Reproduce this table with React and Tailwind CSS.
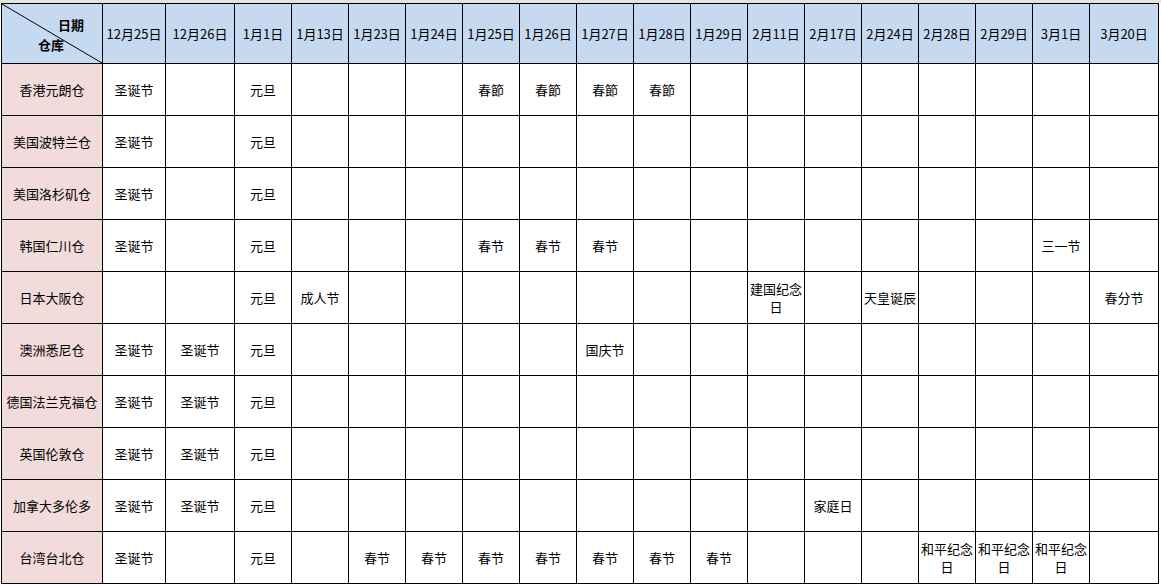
const DATES = [
  "12月25日", "12月26日", "1月1日", "1月13日", "1月23日", "1月24日",
  "1月25日", "1月26日", "1月27日", "1月28日", "1月29日", "2月11日",
  "2月17日", "2月24日", "2月28日", "2月29日", "3月1日", "3月20日",
];

// each row: warehouse name + { columnIndex: holiday }
const ROWS = [
  ["香港元朗仓", { 0: "圣诞节", 2: "元旦", 6: "春節", 7: "春節", 8: "春節", 9: "春節" }],
  ["美国波特兰仓", { 0: "圣诞节", 2: "元旦" }],
  ["美国洛杉矶仓", { 0: "圣诞节", 2: "元旦" }],
  ["韩国仁川仓", { 0: "圣诞节", 2: "元旦", 6: "春节", 7: "春节", 8: "春节", 16: "三一节" }],
  ["日本大阪仓", { 2: "元旦", 3: "成人节", 11: "建国纪念日", 13: "天皇诞辰", 17: "春分节" }],
  ["澳洲悉尼仓", { 0: "圣诞节", 1: "圣诞节", 2: "元旦", 8: "国庆节" }],
  ["德国法兰克福仓", { 0: "圣诞节", 1: "圣诞节", 2: "元旦" }],
  ["英国伦敦仓", { 0: "圣诞节", 1: "圣诞节", 2: "元旦" }],
  ["加拿大多伦多", { 0: "圣诞节", 1: "圣诞节", 2: "元旦", 12: "家庭日" }],
  [
    "台湾台北仓",
    {
      0: "圣诞节", 2: "元旦", 4: "春节", 5: "春节", 6: "春节", 7: "春节",
      8: "春节", 9: "春节", 10: "春节", 14: "和平纪念日", 15: "和平纪念日", 16: "和平纪念日",
    },
  ],
];

const cell = "flex items-center justify-center text-center px-[2px] leading-[18px]";

export default function App() {
  return (
    <div
      className="w-[1161px] h-[585px] bg-white text-[13px] text-black overflow-hidden"
      style={{ fontFamily: '"Noto Sans CJK SC", "Noto Sans", sans-serif' }}
    >
      <div className="h-[3px] bg-[#e4e4df]" />
      <div className="ml-px w-fit bg-black p-px grid gap-px grid-cols-[100px_62px_68px_repeat(15,56px)_68px] grid-rows-[59px_repeat(10,51px)]">
        <div className="relative bg-[#c5d9f1]">
          <svg className="absolute inset-0" width="100" height="59" viewBox="0 0 100 59">
            <line x1="0" y1="0" x2="100" y2="59" stroke="#000" strokeWidth="1" />
          </svg>
          <span className="absolute left-[56px] top-[11px] font-bold">日期</span>
          <span className="absolute left-[36px] top-[31px] font-bold">仓库</span>
        </div>
        {DATES.map((d) => (
          <div key={d} className={`${cell} bg-[#c5d9f1]`}>
            {d}
          </div>
        ))}

        {ROWS.map(([name, holidays]) => (
          <Row key={name} name={name} holidays={holidays} />
        ))}
      </div>
    </div>
  );
}

function Row({ name, holidays }) {
  return (
    <>
      <div className={`${cell} bg-[#f2dcdb]`}>{name}</div>
      {DATES.map((d, i) => (
        <div key={d} className={`${cell} bg-white`}>
          {holidays[i] || ""}
        </div>
      ))}
    </>
  );
}
